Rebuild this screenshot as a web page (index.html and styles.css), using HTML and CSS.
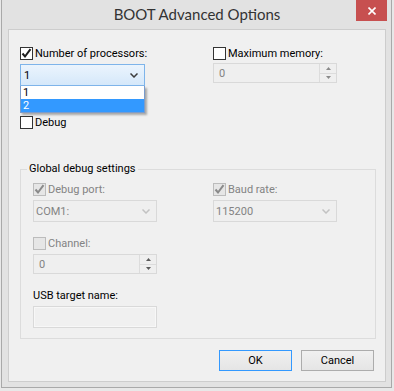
FILE: index.html
```html
<!DOCTYPE html>
<html lang="en">
<head>
    <meta charset="UTF-8">
    <meta name="viewport" content="width=device-width, initial-scale=1.0">
    <title>BOOT Advanced Options</title>
    <link rel="stylesheet" href="styles.css">
</head>
<body>
    <div class="window">
        <div class="titlebar">
            <span class="title">BOOT Advanced Options</span>
            <button class="close" aria-label="Close">
                <svg width="8" height="8" viewBox="0 0 8 8"><path d="M0.5 0.5 L7.5 7.5 M7.5 0.5 L0.5 7.5" stroke="#fff" stroke-width="1.6" fill="none"/></svg>
            </button>
        </div>

        <div class="client">
            <div class="options">
                <div class="col">
                    <label class="check">
                        <span class="box"><svg width="11" height="11" viewBox="0 0 11 11"><path d="M1.5 5.5 L4 8.5 L9.5 1.2" stroke="#1e1e1e" stroke-width="2" fill="none"/></svg></span>
                        Number of processors:
                    </label>
                    <div class="combo-wrap">
                        <div class="field combo open">
                            <span>1</span>
                            <svg width="8" height="5" viewBox="0 0 8 5"><path d="M0.5 0.5 L4 4 L7.5 0.5" stroke="#3c3c3c" stroke-width="1.5" fill="none"/></svg>
                        </div>
                        <ul class="dropdown">
                            <li>1</li>
                            <li class="selected">2</li>
                        </ul>
                    </div>
                    <label class="check debug">
                        <span class="box"></span>
                        Debug
                    </label>
                </div>
                <div class="col">
                    <label class="check">
                        <span class="box"></span>
                        Maximum memory:
                    </label>
                    <div class="field spin memory">
                        <span>0</span>
                        <div class="spin-buttons">
                            <span><svg width="5" height="3" viewBox="0 0 5 3"><path d="M0 3 L2.5 0 L5 3 Z" fill="#8a8a8a"/></svg></span>
                            <span><svg width="5" height="3" viewBox="0 0 5 3"><path d="M0 0 L2.5 3 L5 0 Z" fill="#8a8a8a"/></svg></span>
                        </div>
                    </div>
                </div>
            </div>

            <fieldset class="group">
                <legend>Global debug settings</legend>
                <div class="group-grid">
                    <div class="col">
                        <label class="check disabled">
                            <span class="box"><svg width="11" height="11" viewBox="0 0 11 11"><path d="M1.5 5.5 L4 8.5 L9.5 1.2" stroke="#8a8a8a" stroke-width="2" fill="none"/></svg></span>
                            Debug port:
                        </label>
                        <div class="field combo">
                            <span>COM1:</span>
                            <svg width="8" height="5" viewBox="0 0 8 5"><path d="M0.5 0.5 L4 4 L7.5 0.5" stroke="#c2c2c2" stroke-width="1.5" fill="none"/></svg>
                        </div>
                        <label class="check disabled spaced">
                            <span class="box"></span>
                            Channel:
                        </label>
                        <div class="field spin">
                            <span>0</span>
                            <div class="spin-buttons">
                                <span><svg width="5" height="3" viewBox="0 0 5 3"><path d="M0 3 L2.5 0 L5 3 Z" fill="#5a5a5a"/></svg></span>
                                <span><svg width="5" height="3" viewBox="0 0 5 3"><path d="M0 0 L2.5 3 L5 0 Z" fill="#5a5a5a"/></svg></span>
                            </div>
                        </div>
                        <div class="label spaced">USB target name:</div>
                        <div class="field textbox"></div>
                    </div>
                    <div class="col">
                        <label class="check disabled">
                            <span class="box"><svg width="11" height="11" viewBox="0 0 11 11"><path d="M1.5 5.5 L4 8.5 L9.5 1.2" stroke="#8a8a8a" stroke-width="2" fill="none"/></svg></span>
                            Baud rate:
                        </label>
                        <div class="field combo">
                            <span>115200</span>
                            <svg width="8" height="5" viewBox="0 0 8 5"><path d="M0.5 0.5 L4 4 L7.5 0.5" stroke="#c2c2c2" stroke-width="1.5" fill="none"/></svg>
                        </div>
                    </div>
                </div>
            </fieldset>

            <div class="buttons">
                <button class="btn default">OK</button>
                <button class="btn">Cancel</button>
            </div>
        </div>
    </div>
</body>
</html>
```

FILE: styles.css
```css
* {
    box-sizing: border-box;
}

body {
    margin: 0;
    background-color: #e8e8e8;
    font-family: Roboto, "Liberation Sans", sans-serif;
    font-size: 11px;
    color: #000000;
}

.window {
    width: 391px;
    height: 388px;
    margin-left: 1px;
    padding: 0 5px 5px 6px;
    border: 1px solid #a9a9a9;
    border-top: none;
    background-color: #e2e2e2;
    display: flex;
    flex-direction: column;
}

.titlebar {
    height: 29px;
    flex: none;
    display: grid;
    grid-template-columns: 1fr auto 1fr;
    align-items: start;
}

.title {
    grid-column: 2;
    font-family: Lato, "Liberation Sans", sans-serif;
    font-size: 15px;
    line-height: 29px;
    color: #333333;
}

.close {
    grid-column: 3;
    justify-self: end;
    width: 31px;
    height: 21px;
    margin-right: -1px;
    padding: 0;
    border: none;
    background-color: #c75050;
    display: flex;
    align-items: center;
    justify-content: center;
}

.client {
    flex: 1;
    padding: 16px 0 0 11px;
    border: 1px solid #cdcdcd;
    background-color: #f0f0f0;
    display: flex;
    flex-direction: column;
}

.options {
    display: grid;
    grid-template-columns: 193px 1fr;
}

.group-grid {
    display: grid;
    grid-template-columns: 180px 1fr;
}

.col {
    display: flex;
    flex-direction: column;
    align-items: flex-start;
}

/* checkboxes */
.check {
    height: 15px;
    line-height: 15px;
    display: flex;
    align-items: center;
    gap: 2px;
    white-space: nowrap;
}

.box {
    width: 13px;
    height: 13px;
    border: 1px solid #333333;
    background-color: #ffffff;
    display: flex;
}

.check.disabled {
    color: #838383;
}

.check.disabled .box {
    border-color: #bcbcbc;
    background-color: #e6e6e6;
}

.check.debug {
    margin-top: 29px;
}

.label {
    height: 15px;
    line-height: 15px;
}

.spaced {
    margin-top: 14px;
}

/* inputs */
.field {
    width: 124px;
    height: 22px;
    margin-top: 3px;
    padding: 0 6px 0 2px;
    border: 1px solid #d9d9d9;
    background-color: #efefef;
    color: #838383;
    display: flex;
    align-items: center;
    justify-content: space-between;
}

.combo-wrap {
    position: relative;
    width: 125px;
    margin-top: 3px;
}

.combo.open {
    width: 125px;
    margin-top: 0;
    padding-left: 3px;
    border-color: #7eb4ea;
    background: linear-gradient(#ebf4fd, #d5e8fa);
    color: #000000;
}

.dropdown {
    position: absolute;
    top: 100%;
    left: 0;
    width: 125px;
    margin: 0;
    padding: 0;
    list-style: none;
    border: 1px solid #7a9ccc;
    border-top: none;
    background-color: #ffffff;
    box-shadow: 2px 2px 2px rgba(0, 0, 0, 0.3);
}

.dropdown li {
    height: 13px;
    line-height: 13px;
    padding-left: 2px;
}

.dropdown li.selected {
    background-color: #3399ff;
    color: #ffffff;
}

.spin {
    height: 20px;
    padding: 0 0 0 5px;
}

.spin.memory {
    margin-top: 2px;
}

.spin-buttons {
    width: 17px;
    height: 100%;
    border-left: 1px solid #dcdcdc;
    display: flex;
    flex-direction: column;
}

.spin-buttons span {
    flex: 1;
    display: flex;
    align-items: center;
    justify-content: center;
}

.spin-buttons span + span {
    border-top: 1px solid #dcdcdc;
}

.spin-buttons svg {
    display: block;
}

.textbox {
    background-color: #f0f0f0;
    box-shadow: inset 0 0 0 1px #f7f7f7;
}

/* group box */
.group {
    margin: 32px 9px 0 0;
    padding: 6px 0 10px 12px;
    border: 1px solid #dcdcdc;
    min-width: 0;
}

.group legend {
    margin-left: -6px;
    padding: 0 2px;
    line-height: 14px;
}

/* dialog buttons */
.buttons {
    margin-top: 11px;
    padding-right: 11px;
    display: flex;
    justify-content: flex-end;
    gap: 9px;
}

.btn {
    width: 73px;
    height: 21px;
    padding: 0;
    border: 1px solid #acacac;
    background: linear-gradient(#f0f0f0, #e5e5e5);
    font: inherit;
    color: #000000;
}

.btn.default {
    border-color: #3399ff;
}
```
